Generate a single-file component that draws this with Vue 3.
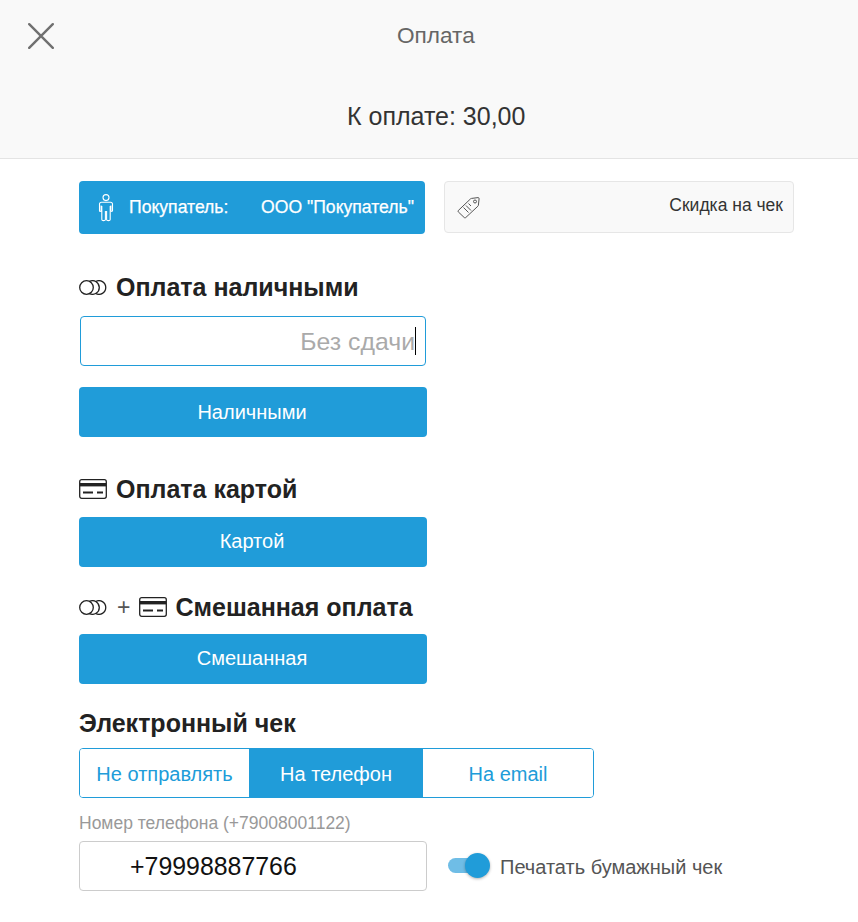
<script setup>
const modes = [
  { label: 'Не отправлять', width: '169px' },
  { label: 'На телефон', width: '174px', active: true },
  { label: 'На email', width: '170px' }
]
</script>

<template>
  <div class="page">
    <header class="head">
      <div class="title-row">
        <svg class="close" width="26" height="26" viewBox="0 0 26 26"><path d="M1.2 1.2 24.8 24.8M24.8 1.2 1.2 24.8" stroke="#707070" stroke-width="2.4" fill="none" stroke-linecap="round"/></svg>
        <span class="title">Оплата</span>
      </div>
      <div class="total">К оплате: 30,00</div>
    </header>

    <main class="body">
      <div class="top-row">
        <button class="customer">
          <svg width="16" height="28" viewBox="0 0 16 28" fill="none" stroke="#fff" stroke-width="1.1"><circle cx="8" cy="3.6" r="3"/><path d="M3.5 8.2h9c1.2 0 2 .8 2 2v6.6c0 .8-1.5.8-1.6 0v-5.3M3.1 11.5v5.3c0 .8-1.6.8-1.6 0v-6.6c0-1.2.8-2 2-2M3.8 12v13.4c0 1.6 3.6 1.6 3.6 0V17M8.6 17v8.4c0 1.6 3.6 1.6 3.6 0V12"/></svg>
          <span class="customer-label">Покупатель:</span>
          <span class="customer-name">ООО "Покупатель"</span>
        </button>
        <button class="discount">
          <svg width="24" height="24" viewBox="0 0 24 24" fill="none" stroke="#555" stroke-width="1"><path d="M1.3 15.5 13.6 3.8c.3-.3.7-.4 1.1-.4l6.3-.8c.7-.1 1.2.5 1.1 1.1l-.7 6.4c0 .4-.2.8-.5 1.1L8.7 22.6c-.4.4-1 .4-1.4 0l-6-5.7c-.4-.4-.4-1 0-1.4Z"/><circle cx="18" cy="6.5" r="1.5"/><path d="m6.5 12.5 5 5M9 10.5l5 5M11.5 8.5l2.5 2.5"/></svg>
          <span class="discount-label">Скидка на чек</span>
        </button>
      </div>

      <h2 class="heading cash-heading">
        <svg class="coins" width="28" height="15" viewBox="0 0 28 15" fill="none" stroke="#222" stroke-width="1.3"><circle cx="7.5" cy="7.5" r="6.8"/><path d="M10.5 1.4A6.8 6.8 0 1 1 10.5 13.6"/><path d="M16.75 1.5A6.8 6.8 0 1 1 16.75 13.5"/></svg>
        <span>Оплата наличными</span>
      </h2>
      <div class="cash-input">
        <span class="placeholder">Без сдачи</span><i class="caret"></i>
      </div>
      <button class="pay cash-btn">Наличными</button>

      <h2 class="heading card-heading">
        <svg class="card" width="28" height="20" viewBox="0 0 28 20" fill="none"><rect x=".7" y=".7" width="26.6" height="18.6" rx="2" stroke="#222" stroke-width="1.3"/><rect x="1" y="4" width="26" height="3.4" fill="#222"/><path d="M4 13.5h10M18 13.5h6" stroke="#222" stroke-width="2"/></svg>
        <span>Оплата картой</span>
      </h2>
      <button class="pay raised">Картой</button>

      <h2 class="heading mixed-heading">
        <svg class="coins" width="28" height="15" viewBox="0 0 28 15" fill="none" stroke="#222" stroke-width="1.3"><circle cx="7.5" cy="7.5" r="6.8"/><path d="M10.5 1.4A6.8 6.8 0 1 1 10.5 13.6"/><path d="M16.75 1.5A6.8 6.8 0 1 1 16.75 13.5"/></svg>
        <span class="plus">+</span>
        <svg class="card" width="28" height="20" viewBox="0 0 28 20" fill="none"><rect x=".7" y=".7" width="26.6" height="18.6" rx="2" stroke="#222" stroke-width="1.3"/><rect x="1" y="4" width="26" height="3.4" fill="#222"/><path d="M4 13.5h10M18 13.5h6" stroke="#222" stroke-width="2"/></svg>
        <span class="mixed-text">Смешанная оплата</span>
      </h2>
      <button class="pay raised">Смешанная</button>

      <h2 class="heading receipt-heading">Электронный чек</h2>
      <div class="segments">
        <button
          v-for="m in modes"
          :key="m.label"
          class="segment"
          :class="{ active: m.active }"
          :style="{ width: m.width }"
        >{{ m.label }}</button>
      </div>

      <div class="phone-label">Номер телефона (+79008001122)</div>
      <div class="bottom-row">
        <div class="phone">+79998887766</div>
        <div class="toggle"><span class="track"></span><span class="thumb"></span></div>
        <span class="print">Печатать бумажный чек</span>
      </div>
    </main>
  </div>
</template>

<style scoped>
.page {
  width: 858px;
  height: 922px;
  overflow: hidden;
  background: #fff;
  font-family: "Liberation Sans", Arial, sans-serif;
  color: #222;
}
.head {
  height: 159px;
  box-sizing: border-box;
  background: #f9f9f9;
  border-bottom: 1px solid #e4e4e4;
  padding: 23px 0 0 28px;
}
.title-row {
  display: flex;
  align-items: center;
  height: 26px;
}
.close { flex: none; }
.title {
  margin-left: 343px;
  font-size: 22.6px;
  color: #666;
}
.total {
  margin-top: 53px;
  margin-left: 319px;
  font-size: 25px;
  line-height: 28px;
  color: #333;
}
.body {
  padding: 22px 0 0 79px;
}
.top-row {
  display: flex;
  align-items: flex-start;
  gap: 19px;
}
button {
  font-family: inherit;
  border: 0;
  margin: 0;
  cursor: pointer;
}
.customer {
  width: 346px;
  height: 53px;
  background: #209cd9;
  border-radius: 4px;
  color: #fff;
  display: flex;
  align-items: center;
  padding: 0 11px 0 19px;
  font-size: 17.6px;
  -webkit-text-stroke: .25px #fff;
}
.customer-label { margin-left: 15px; }
.customer-name { margin-left: auto; }
.discount {
  width: 350px;
  height: 52px;
  background: #f9f9f9;
  border: 1px solid #e6e6e6;
  border-radius: 4px;
  color: #333;
  display: flex;
  align-items: center;
  justify-content: space-between;
  padding: 0 10px 0 12px;
  font-size: 17.5px;
}
.discount-label { margin-bottom: 3px; }
.heading {
  margin: 0;
  display: flex;
  align-items: center;
  gap: 9px;
  font-size: 25px;
  line-height: 30px;
  font-weight: 700;
  color: #222;
}
.cash-heading { margin-top: 38px; }
.card-heading { margin-top: 37px; margin-bottom: 13px; }
.mixed-heading { margin-top: 25px; margin-bottom: 12px; }
.receipt-heading { margin-top: 24px; margin-bottom: 10px; }
.plus { font-weight: 400; font-size: 23px; color: #555; margin-left: 1px; }
.mixed-text { margin-left: -1px; }
.cash-input {
  width: 346px;
  height: 50px;
  box-sizing: border-box;
  margin: 14px 0 0 1px;
  border: 1px solid #209cd9;
  border-radius: 4px;
  display: flex;
  align-items: center;
  justify-content: flex-end;
  padding-right: 9px;
}
.placeholder { font-size: 24.8px; color: #aaa; margin-top: 2px; }
.caret {
  width: 1px;
  height: 28px;
  background: #000;
}
.pay {
  display: block;
  width: 348px;
  height: 50px;
  background: #209cd9;
  border-radius: 4px;
  color: #fff;
  font-size: 20px;
  padding: 0 2px 0 0;
}
.pay.raised { padding-bottom: 2px; }
.cash-btn { margin-top: 21px; }
.segments {
  display: flex;
  width: 515px;
  height: 50px;
  box-sizing: border-box;
  border: 1px solid #209cd9;
  border-radius: 4px;
  overflow: hidden;
}
.segment {
  flex: none;
  background: #fff;
  color: #209cd9;
  font-size: 20px;
  padding: 2px 0 0;
}
.segment.active {
  background: #209cd9;
  color: #fff;
}
.phone-label {
  margin-top: 15px;
  font-size: 17.5px;
  line-height: 20px;
  color: #999;
}
.bottom-row {
  display: flex;
  align-items: center;
  margin-top: 8px;
}
.phone {
  width: 348px;
  height: 50px;
  box-sizing: border-box;
  border: 1px solid #ccc;
  border-radius: 4px;
  padding-left: 50px;
  font-size: 24.9px;
  line-height: 48px;
  color: #111;
}
.toggle {
  position: relative;
  width: 42px;
  height: 26px;
  margin-left: 21px;
}
.track {
  position: absolute;
  left: 0;
  top: 5px;
  width: 32px;
  height: 15px;
  border-radius: 8px;
  background: #6fbde6;
}
.thumb {
  position: absolute;
  left: 17px;
  top: 0;
  width: 25px;
  height: 25px;
  border-radius: 50%;
  background: #209cd9;
  box-shadow: 0 1px 3px rgba(0, 0, 0, .3);
}
.print {
  margin-left: 10px;
  margin-top: 2px;
  font-size: 20px;
  color: #555;
}
</style>
